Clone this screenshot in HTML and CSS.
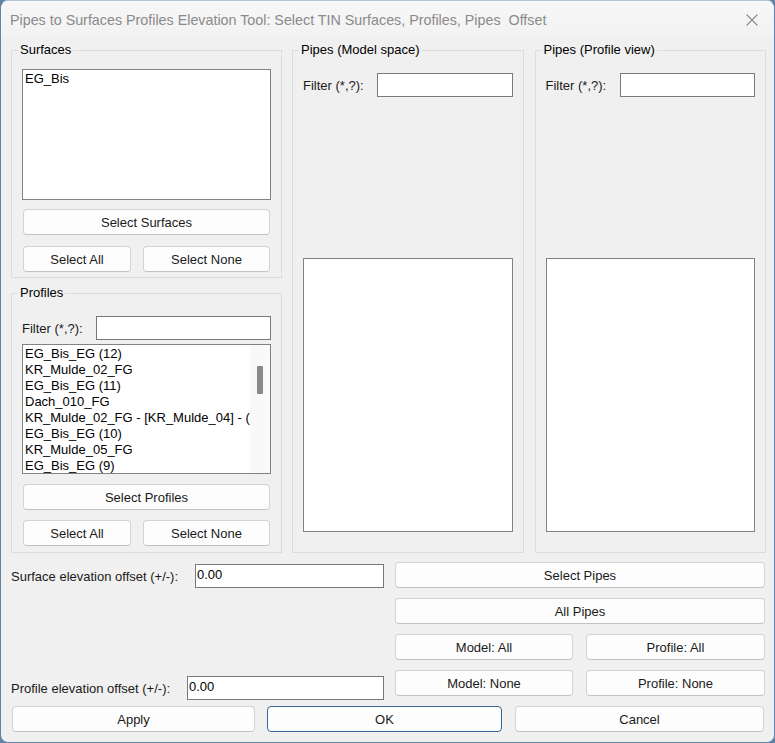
FILE: index.html
```html
<!DOCTYPE html>
<html>
<head>
<meta charset="utf-8">
<title>Pipes to Surfaces Profiles Elevation Tool</title>
<link rel="stylesheet" href="styles.css">
</head>
<body>
<div class="window">
  <div class="titlebar">
    <span class="title">Pipes to Surfaces Profiles Elevation Tool: Select TIN Surfaces, Profiles, Pipes  Offset</span>
    <svg class="close" width="12" height="12" viewBox="0 0 12 12"><path d="M0.5 0.5 L11.5 11.5 M11.5 0.5 L0.5 11.5" stroke="#8a8a8a" stroke-width="1.1" fill="none"/></svg>
  </div>
  <div class="content">
    <div class="groups">
      <div class="leftcol">
        <fieldset class="group g-surfaces">
          <legend>Surfaces</legend>
          <div class="listbox lb-surfaces">
            <div class="items"><div class="item">EG_Bis</div></div>
          </div>
          <button class="btn btn-wide btn-first">Select Surfaces</button>
          <div class="btnrow">
            <button class="btn b-all">Select All</button>
            <button class="btn b-none">Select None</button>
          </div>
        </fieldset>
        <fieldset class="group g-profiles">
          <legend>Profiles</legend>
          <div class="filter">
            <span class="flabel">Filter (*,?):</span>
            <input class="textbox" type="text">
          </div>
          <div class="listbox lb-profiles">
            <div class="items">
              <div class="item">EG_Bis_EG (12)</div>
              <div class="item">KR_Mulde_02_FG</div>
              <div class="item">EG_Bis_EG (11)</div>
              <div class="item">Dach_010_FG</div>
              <div class="item">KR_Mulde_02_FG - [KR_Mulde_04] - (1)</div>
              <div class="item">EG_Bis_EG (10)</div>
              <div class="item">KR_Mulde_05_FG</div>
              <div class="item">EG_Bis_EG (9)</div>
            </div>
            <div class="scroll"><div class="thumb"></div></div>
          </div>
          <button class="btn btn-wide btn-prof">Select Profiles</button>
          <div class="btnrow btnrow-prof">
            <button class="btn b-all">Select All</button>
            <button class="btn b-none">Select None</button>
          </div>
        </fieldset>
      </div>
      <fieldset class="group g-pipes">
        <legend>Pipes (Model space)</legend>
        <div class="filter">
          <span class="flabel">Filter (*,?):</span>
          <input class="textbox" type="text">
        </div>
        <div class="listbox lb-pipes"></div>
      </fieldset>
      <fieldset class="group g-pipes g-last">
        <legend>Pipes (Profile view)</legend>
        <div class="filter">
          <span class="flabel">Filter (*,?):</span>
          <input class="textbox" type="text">
        </div>
        <div class="listbox lb-pipes"></div>
      </fieldset>
    </div>
    <div class="bottom">
      <div class="offsets">
        <div class="offrow off-surface">
          <span class="olabel ol-surface">Surface elevation offset (+/-):</span>
          <input class="textbox otext" type="text" value="0.00">
        </div>
        <div class="offrow off-profile">
          <span class="olabel ol-profile">Profile elevation offset (+/-):</span>
          <input class="textbox otext" type="text" value="0.00">
        </div>
      </div>
      <div class="pipebtns">
        <button class="btn">Select Pipes</button>
        <button class="btn">All Pipes</button>
        <div class="pair">
          <button class="btn">Model: All</button>
          <button class="btn">Profile: All</button>
        </div>
        <div class="pair">
          <button class="btn">Model: None</button>
          <button class="btn">Profile: None</button>
        </div>
      </div>
    </div>
    <div class="actions">
      <button class="btn">Apply</button>
      <button class="btn btn-ok">OK</button>
      <button class="btn btn-cancel">Cancel</button>
    </div>
  </div>
</div>
</body>
</html>
```

FILE: styles.css
```css
html, body {
  margin: 0;
  padding: 0;
}
body {
  background: #5f82a6;
  font-family: "Liberation Sans", Arial, sans-serif;
  font-size: 13px;
  color: #000;
}
.window {
  box-sizing: border-box;
  width: 775px;
  height: 743px;
  background: #f0f0f0;
  border: 1px solid #6284a8;
  border-top-color: #b3c4d6;
  border-radius: 8px;
  overflow: hidden;
}
.titlebar {
  height: 37px;
  display: flex;
  align-items: center;
  justify-content: space-between;
  padding: 0 16px 0 9px;
  background: linear-gradient(#f7f7f7, #f2f2f2);
}
.title {
  white-space: pre;
  font-size: 14.3px;
  color: #8a8a8a;
  margin-top: 1px;
}
.close {
  display: block;
  margin-top: 1px;
}
.content {
  padding: 4px 8px 0 10px;
}
.groups {
  display: flex;
  align-items: stretch;
}
.leftcol {
  width: 271px;
  display: flex;
  flex-direction: column;
}
.group {
  box-sizing: border-box;
  margin: 0;
  padding: 0 10px;
  border: 1px solid #dcdcdc;
  min-width: 0;
  display: flex;
  flex-direction: column;
}
.group legend {
  margin-left: -4px;
  padding: 0 2px;
  line-height: 16px;
  font-size: 13px;
}
.g-surfaces {
  padding-bottom: 5px;
}
.g-profiles {
  margin-top: 7px;
  padding-bottom: 6px;
}
.g-pipes {
  width: 232px;
  margin-left: 10px;
  padding-bottom: 20px;
}
.g-last {
  margin-left: 11px;
}
.listbox {
  box-sizing: border-box;
  background: #fff;
  border: 1px solid #828282;
  display: flex;
  overflow: hidden;
}
.items {
  flex: 1;
  min-width: 0;
  padding: 1px 0 0 2px;
  overflow: hidden;
}
.item {
  line-height: 16px;
  white-space: nowrap;
  overflow: hidden;
}
.lb-surfaces {
  margin-top: 11px;
  height: 131px;
}
.lb-profiles {
  margin-top: 4px;
  height: 130px;
}
.lb-pipes {
  margin-top: auto;
  height: 274px;
}
.scroll {
  width: 20px;
  background: #f9f9f9;
  display: flex;
  justify-content: center;
}
.thumb {
  width: 6px;
  height: 28px;
  margin-top: 21px;
  background: #8a8a8a;
  border-radius: 1px;
}
.btn {
  box-sizing: border-box;
  height: 26px;
  padding: 0;
  margin: 0;
  font-family: "Liberation Sans", Arial, sans-serif;
  font-size: 13px;
  color: #1a1a1a;
  background: #fdfdfd;
  border: 1px solid #d3d3d3;
  border-bottom-color: #c2c2c2;
  border-radius: 4px;
}
.btn-wide {
  margin: 0 1px;
}
.btn-first {
  margin-top: 9px;
}
.btn-prof {
  margin-top: 10px;
}
.btnrow {
  margin: 11px 1px 0;
  display: flex;
  justify-content: space-between;
}
.btnrow-prof {
  margin-top: 10px;
}
.b-all {
  width: 108px;
}
.b-none {
  width: 127px;
}
.filter {
  margin-top: 15px;
  display: flex;
  align-items: center;
}
.flabel {
  width: 74px;
  flex: none;
  color: #1a1a1a;
}
.textbox {
  box-sizing: border-box;
  height: 24px;
  border: 1px solid #7a7a7a;
  background: #fff;
  padding: 0 2px 2px;
  margin: 0;
  font-family: "Liberation Sans", Arial, sans-serif;
  font-size: 13px;
  color: #000;
  outline: none;
  border-radius: 0;
}
.filter .textbox {
  flex: 1;
  min-width: 0;
}
.bottom {
  margin-top: 9px;
  display: grid;
  grid-template-columns: 373px 370px;
  column-gap: 11px;
}
.offsets {
  padding-top: 2px;
  display: flex;
  flex-direction: column;
}
.offrow {
  display: flex;
  align-items: center;
}
.off-profile {
  margin-top: 88px;
}
.olabel {
  flex: none;
  color: #1a1a1a;
}
.ol-surface {
  width: 184px;
}
.ol-profile {
  width: 176px;
}
.otext {
  flex: 1;
  min-width: 0;
  padding: 0 2px 4px 1px;
}
.pipebtns {
  display: flex;
  flex-direction: column;
  gap: 10px;
}
.pair {
  display: grid;
  grid-template-columns: 178px 179px;
  column-gap: 13px;
}
.actions {
  margin-top: 6px;
  padding-left: 1px;
  display: grid;
  grid-template-columns: 243px 235px 250px;
  column-gap: 12px;
}
.btn-ok {
  border-color: #3a6a94;
}
.btn-cancel {
  margin-left: 1px;
}
```
